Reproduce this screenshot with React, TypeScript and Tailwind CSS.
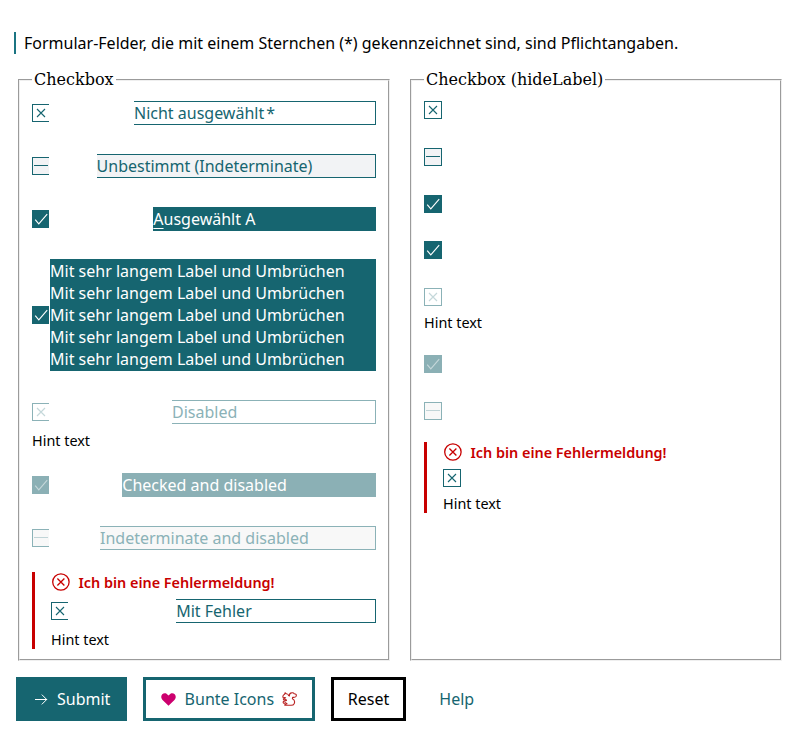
import type { ReactNode } from 'react';

type State = 'off' | 'mixed' | 'on';

const tones = {
  off: { normal: 'border-[#166570] bg-white text-[#166570]', disabled: 'border-[#8bb2b7] bg-white text-[#8bb2b7]' },
  mixed: { normal: 'border-[#166570] bg-[#f2f3f5] text-[#166570]', disabled: 'border-[#8bb2b7] bg-[#f8f8f8] text-[#8bb2b7]' },
  on: { normal: 'border-[#166570] bg-[#166570] text-white', disabled: 'border-[#8bb0b5] bg-[#8bb0b5] text-white' },
};

function Box({ state, disabled, open }: { state: State; disabled?: boolean; open?: boolean }) {
  const tone = tones[state][disabled ? 'disabled' : 'normal'];
  return (
    <span className={`block h-[18px] shrink-0 border ${open ? 'w-[17px] border-r-0' : 'w-[18px]'} ${tone}`}>
      <svg viewBox="1 1 16 16" className={`block h-4 w-4 ${disabled ? 'opacity-50' : ''}`} fill="none" stroke="currentColor">
        {state === 'off' && <path d="M5 5l8 8M13 5l-8 8" strokeWidth="1.1" />}
        {state === 'mixed' && <path d="M2 8.5h14" />}
        {state === 'on' && <path d="M3.2 9.6l3.6 4.2L15.2 4.2" strokeWidth="1.1" />}
      </svg>
    </span>
  );
}

function Row({ state, disabled, width, children }: { state: State; disabled?: boolean; width: string; children: ReactNode }) {
  return (
    <div className="flex items-center justify-between">
      <Box state={state} disabled={disabled} open />
      <span className={`border border-l-0 text-base leading-[22px] ${width} ${tones[state][disabled ? 'disabled' : 'normal']}`}>
        {children}
      </span>
    </div>
  );
}

function ErrorMessage() {
  return (
    <div className="flex h-[21px] items-center gap-[8.5px] text-[14.4px] font-semibold text-[#c80000]">
      <svg viewBox="0 0 19 19" className="h-[19px] w-[19px]" fill="none" stroke="currentColor" strokeWidth="1.3">
        <circle cx="9.9" cy="9" r="8.2" />
        <path d="M6.4 5.5l7 7M13.4 5.5l-7 7" />
      </svg>
      Ich bin eine Fehlermeldung!
    </div>
  );
}

const Hint = ({ className = '' }: { className?: string }) => (
  <div className={`text-[14.4px] leading-5 text-black ${className}`}>Hint text</div>
);

const fieldset =
  'h-[591px] w-[372px] border-2 [border-style:groove] [border-color:ThreeDFace] px-3';
const legend = 'px-[2px] font-["DejaVu_Serif",serif] text-base leading-[19px]';

export default function App() {
  return (
    <div className='h-[737px] w-[800px] overflow-hidden bg-white font-["Noto_Sans",sans-serif] text-base text-black'>
      <p className="mt-8 ml-[14px] border-l-2 border-[#1b7482] pl-2 leading-[22px]">
        Formular-Felder, die mit einem Sternchen (*) gekennzeichnet sind, sind Pflichtangaben.
      </p>
      <main className="mt-4 ml-[18px] flex gap-5">
        <fieldset className={fieldset}>
          <legend className={legend}>Checkbox</legend>
          <div className="flex flex-col pt-3">
            <Row state="off" width="w-[242px]">
              Nicht ausgewählt<span className="pl-[2px]">*</span>
            </Row>
            <div className="mt-[29px]">
              <Row state="mixed" width="w-[279.45px]">Unbestimmt (Indeterminate)</Row>
            </div>
            <div className="mt-[29px]">
              <Row state="on" width="w-[222.7px]">
                <u className="underline decoration-1 underline-offset-[3px]">A</u>usgewählt A
              </Row>
            </div>
            <div className="mt-7">
              <Row state="on" width="w-[326px]">
                Mit sehr langem Label und Umbrüchen<br />
                Mit sehr langem Label und Umbrüchen<br />
                Mit sehr langem Label und Umbrüchen<br />
                Mit sehr langem Label und Umbrüchen<br />
                Mit sehr langem Label und Umbrüchen
              </Row>
            </div>
            <div className="mt-[29px]">
              <Row state="off" disabled width="w-[204px]">Disabled</Row>
              <Hint className="mt-[7px]" />
            </div>
            <div className="mt-[22px]">
              <Row state="on" disabled width="w-[253.7px]">Checked and disabled</Row>
            </div>
            <div className="mt-[29px]">
              <Row state="mixed" disabled width="w-[276px]">Indeterminate and disabled</Row>
            </div>
            <div className="mt-[22px] h-[77px] border-l-[3px] border-[#c80000] pl-4">
              <ErrorMessage />
              <div className="mt-[6px]">
                <Row state="off" width="w-[199.8px]">Mit Fehler</Row>
              </div>
              <Hint className="mt-[7px]" />
            </div>
          </div>
        </fieldset>
        <fieldset className={fieldset}>
          <legend className={legend}>Checkbox (hideLabel)</legend>
          <div className="flex flex-col pt-3">
            <Box state="off" />
            <div className="mt-[29px]"><Box state="mixed" /></div>
            <div className="mt-[29px]"><Box state="on" /></div>
            <div className="mt-7"><Box state="on" /></div>
            <div className="mt-[29px]">
              <Box state="off" disabled />
              <Hint className="mt-[7px]" />
            </div>
            <div className="mt-[22px]"><Box state="on" disabled /></div>
            <div className="mt-[29px]"><Box state="mixed" disabled /></div>
            <div className="mt-[22px] h-[71px] border-l-[3px] border-[#c80000] pl-4">
              <ErrorMessage />
              <div className="mt-[6px]"><Box state="off" /></div>
              <Hint className="mt-[7px]" />
            </div>
          </div>
        </fieldset>
      </main>
      <footer className="mt-4 ml-4 flex h-11 gap-4">
        <button className="flex w-[111px] items-center bg-[#166570] pl-[18px] text-white">
          <svg viewBox="0 0 15 12" className="mr-2 h-3 w-[15px]" fill="none" stroke="currentColor">
            <path d="M1 6.5h12M7.8 1.6l4.9 4.9-4.9 4.9" />
          </svg>
          Submit
        </button>
        <button className="flex w-[172px] items-center border-[3px] border-[#166570] pl-[15px] text-[#166570]">
          <svg viewBox="0 0 15 13" className="mr-[8.6px] h-[13px] w-[15px]" fill="#cc006e">
            <path d="M7.5 12.8L1.3 6.7C-1.5 3.5 1.7-.8 5.2.6L7.5 2.5 9.8.6C13.3-.8 16.5 3.5 13.7 6.7Z" />
          </svg>
          Bunte Icons
          <svg viewBox="0 0 15 14" className="ml-[8.4px] h-[14px] w-[15px]" fill="none" stroke="#b92323" strokeWidth="1.1" strokeLinejoin="round">
            <path d="M3 .8L4.3 1.8Q6.4 1.9 6.6 3.6L7.4 4Q7.3 1.1 9.4.9Q11.6.4 12.2 1.8Q14.8 1.9 14.2 4.2Q13.2 5.6 10.6 5.3L10.4 6.7Q13.4 8 12.3 11.4Q11.4 13.4 8.8 13.3H2.8Q2.7 11.8 5 11.8L3.4 10.6L2.2 11.4Q.7 11 1.4 9.5L4.5 8.4L4 7.5L1.9 8L1.3 7L3.6 5.7L.9 5.3Q.5 3.4 2.6 2.3Z" />
          </svg>
        </button>
        <button className="w-[75px] border-[3px] border-black text-black">Reset</button>
        <button className="ml-[17.3px] text-[#166570]">Help</button>
      </footer>
    </div>
  );
}
